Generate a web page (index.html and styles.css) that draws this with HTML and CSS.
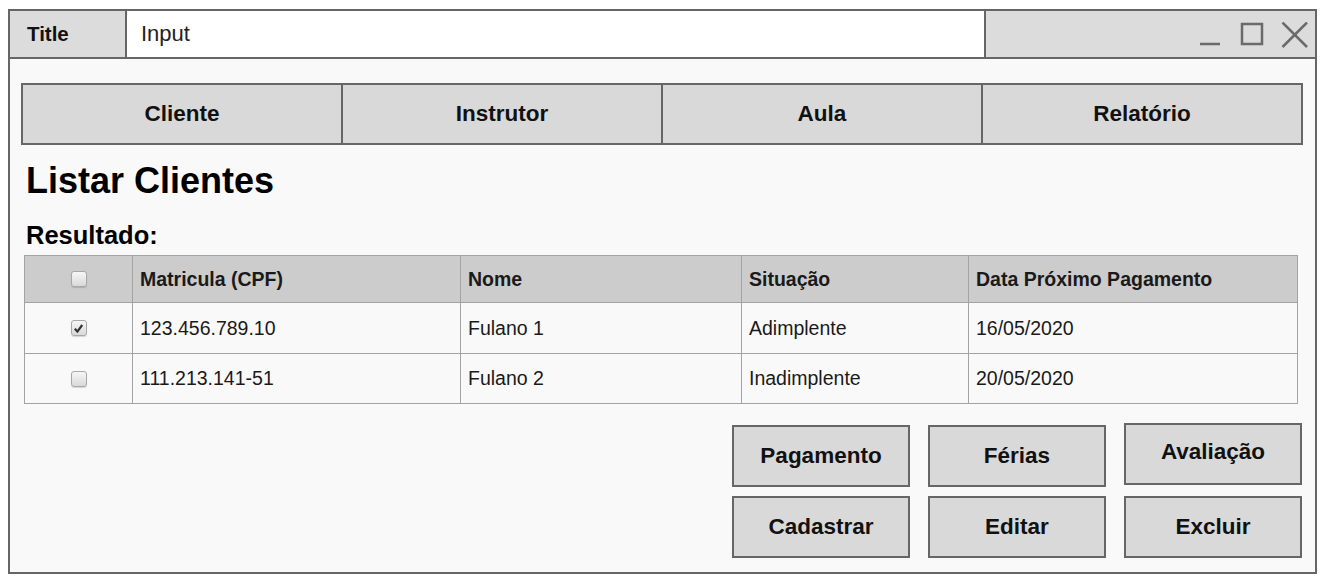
FILE: index.html
```html
<!DOCTYPE html>
<html lang="pt-BR">
<head>
<meta charset="utf-8">
<title>Listar Clientes</title>
<link rel="stylesheet" href="styles.css">
</head>
<body>
<div class="window">
  <div class="titlebar">
    <div class="title-cell">Title</div>
    <div class="input-cell">Input</div>
    <div class="controls">
      <svg class="win-icons" width="108" height="26" viewBox="0 0 108 26" aria-hidden="true">
        <line x1="0" y1="22" x2="20" y2="22" />
        <rect x="42" y="2" width="20" height="20" />
        <line x1="82.5" y1="0.5" x2="107" y2="25" />
        <line x1="107" y1="0.5" x2="82.5" y2="25" />
      </svg>
    </div>
  </div>
  <div class="content">
    <nav class="tabs">
      <div class="tab">Cliente</div>
      <div class="tab">Instrutor</div>
      <div class="tab">Aula</div>
      <div class="tab">Relatório</div>
    </nav>
    <h1 class="headline">Listar Clientes</h1>
    <h2 class="subhead">Resultado:</h2>
    <div class="table">
      <div class="row head">
        <div class="cell check"><span class="cb"></span></div>
        <div class="cell">Matricula (CPF)</div>
        <div class="cell">Nome</div>
        <div class="cell">Situação</div>
        <div class="cell">Data Próximo Pagamento</div>
      </div>
      <div class="row r1">
        <div class="cell check"><span class="cb"><svg width="11" height="11" viewBox="0 0 11 11"><path d="M1.8 5.8 L4.4 8.6 L9.2 2" /></svg></span></div>
        <div class="cell">123.456.789.10</div>
        <div class="cell">Fulano 1</div>
        <div class="cell">Adimplente</div>
        <div class="cell">16/05/2020</div>
      </div>
      <div class="row r2">
        <div class="cell check"><span class="cb"></span></div>
        <div class="cell">111.213.141-51</div>
        <div class="cell">Fulano 2</div>
        <div class="cell">Inadimplente</div>
        <div class="cell">20/05/2020</div>
      </div>
    </div>
    <div class="actions">
      <div class="btn">Pagamento</div>
      <div class="btn">Férias</div>
      <div class="btn btn-raised">Avaliação</div>
      <div class="btn">Cadastrar</div>
      <div class="btn">Editar</div>
      <div class="btn">Excluir</div>
    </div>
  </div>
</div>
</body>
</html>
```
FILE: styles.css
```css
* { box-sizing: border-box; }
html, body { margin: 0; padding: 0; background: #ffffff; }
body {
  font-family: "Liberation Sans", Arial, Helvetica, sans-serif;
  color: #111;
}
.window {
  margin: 9px 0 0 8px;
  width: 1309px;
  height: 565px;
  border: 2px solid #666;
  background: #f9f9f9;
  display: flex;
  flex-direction: column;
}
.titlebar {
  display: flex;
  height: 48px;
  border-bottom: 2px solid #666;
  flex: 0 0 auto;
}
.title-cell {
  width: 117px;
  background: #dcdcdc;
  border-right: 2px solid #666;
  display: flex;
  align-items: center;
  padding-left: 17px;
  font-weight: bold;
  font-size: 20.5px;
}
.input-cell {
  width: 859px;
  background: #fff;
  border-right: 2px solid #666;
  display: flex;
  align-items: center;
  padding-left: 14px;
  font-size: 22px;
  color: #222;
}
.controls {
  flex: 1;
  background: #dcdcdc;
  display: flex;
  justify-content: flex-end;
  align-items: flex-start;
  padding: 11px 7px 0 0;
}
.win-icons { display: block; }
.win-icons line, .win-icons rect {
  fill: none;
  stroke: #6a6a6a;
  stroke-width: 2.5;
}
.content {
  flex: 1;
  padding: 24px 12px 0 11px;
  display: flex;
  flex-direction: column;
}
.tabs {
  display: flex;
  height: 62px;
  border: 2px solid #666;
  background: #d9d9d9;
}
.tab {
  flex: 1;
  display: flex;
  align-items: center;
  justify-content: center;
  font-weight: bold;
  font-size: 22.5px;
}
.tab + .tab { border-left: 2px solid #666; }
.headline {
  margin: 16px 0 0 5px;
  font-size: 36px;
  line-height: 40px;
  font-weight: bold;
  color: #000;
}
.subhead {
  margin: 20px 0 0 5px;
  font-size: 25.5px;
  line-height: 29px;
  font-weight: bold;
  color: #000;
}
.table {
  margin: 5px 5px 0 3px;
  border: 1px solid #a3a3a3;
  background: #f9f9f9;
}
.row {
  display: grid;
  grid-template-columns: 108px 328px 281px 227px 1fr;
  border-bottom: 1px solid #a3a3a3;
  height: 51px;
}
.row.head { background: #cccccc; height: 47px; font-weight: bold; }
.row.r2 { border-bottom: none; height: 49px; }
.cell {
  display: flex;
  align-items: center;
  padding-left: 7px;
  font-size: 19.5px;
  border-right: 1px solid #a3a3a3;
  color: #1a1a1a;
}
.cell:last-child { border-right: none; }
.cell.check { justify-content: center; padding-left: 0; }
.cb {
  width: 16px;
  height: 16px;
  border: 1px solid #a8a8a8;
  border-radius: 3px;
  background: linear-gradient(#f6f6f6, #d9d9d9);
  box-shadow: 0 1px 1px rgba(0,0,0,0.15);
  display: flex;
  align-items: center;
  justify-content: center;
}
.cb svg path {
  fill: none;
  stroke: #333;
  stroke-width: 2.2;
}
.actions {
  margin: 21px 1px 0 0;
  display: grid;
  grid-template-columns: repeat(3, 178px);
  grid-auto-rows: 62px;
  column-gap: 18px;
  row-gap: 9px;
  justify-content: end;
}
.btn {
  border: 2px solid #666;
  background: #d9d9d9;
  display: flex;
  align-items: center;
  justify-content: center;
  font-weight: bold;
  font-size: 22.5px;
  color: #111;
}
.btn-raised {
  margin-top: -2px;
  margin-bottom: 2px;
  padding-bottom: 5px;
}
```
